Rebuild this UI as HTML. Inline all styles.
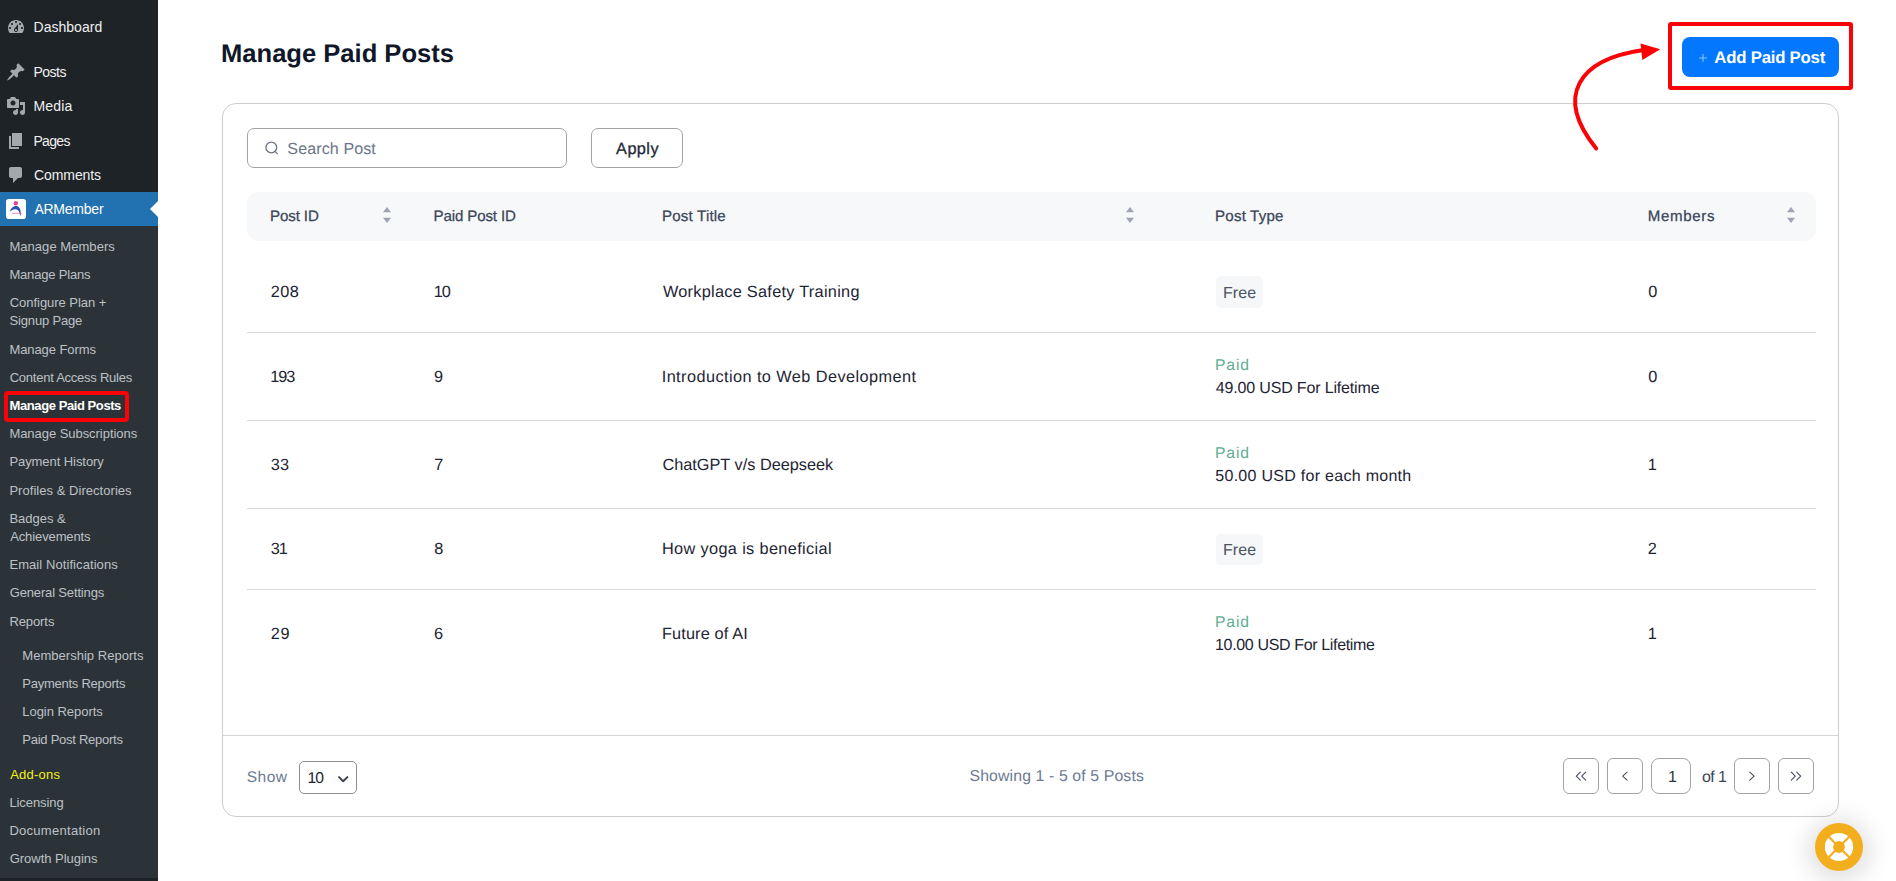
<!DOCTYPE html>
<html>
<head>
<meta charset="utf-8">
<title>Manage Paid Posts</title>
<style>
*{box-sizing:border-box;margin:0;padding:0}
html,body{width:1896px;height:881px;overflow:hidden;background:#fff;font-family:"Liberation Sans",sans-serif;}
.a{position:absolute}
.t{position:absolute;white-space:nowrap;line-height:20px;height:20px}
.ic{position:absolute;width:20px;height:20px;fill:#a4a8ac}
.pb{position:absolute;top:758px;width:36px;height:36px;border:1px solid #a1a3a6;border-radius:6px;background:#fff}
.hl{position:absolute;left:247px;width:1569px;height:1px;background:#d8dadd}
.ch{position:absolute;fill:none;stroke:#4a5260;stroke-width:1.15;stroke-linecap:round;stroke-linejoin:round}
.sort{position:absolute;top:207px;width:8px;height:16px}
</style>
</head>
<body>
<!-- ===== sidebar ===== -->
<div class="a" style="left:0;top:0;width:158px;height:881px;background:#1d2327"></div>
<div class="a" style="left:0;top:192px;width:158px;height:34px;background:#2271b1"></div>
<div class="a" style="left:0;top:226px;width:158px;height:652px;background:#2c3338"></div>
<div class="a" style="left:150px;top:201px;width:0;height:0;border:8px solid transparent;border-right-color:#fff;border-left-width:0"></div>

<svg class="ic" style="left:6px;top:17px" viewBox="0 0 20 20"><path d="M3.76 16h12.48c1.1-1.37 1.76-3.11 1.76-5 0-4.420-3.580-8-8-8s-8 3.580-8 8c0 1.890.660 3.630 1.760 5zM10 4c.550 0 1 .450 1 1s-.450 1-1 1-1-.450-1-1 .450-1 1-1zM6 6c.550 0 1 .450 1 1s-.450 1-1 1-1-.450-1-1 .450-1 1-1zm8 0c.550 0 1 .450 1 1s-.450 1-1 1-1-.450-1-1 .450-1 1-1zm-5.370 5.550L12 7v6c0 1.100-.900 2-2 2s-2-.900-2-2c0-.570.240-1.080.630-1.450zM4 10c.550 0 1 .450 1 1s-.450 1-1 1-1-.450-1-1 .450-1 1-1zm12 0c.550 0 1 .450 1 1s-.450 1-1 1-1-.450-1-1 .450-1 1-1zm-5 3c0-.550-.450-1-1-1s-1 .450-1 1 .450 1 1 1 1-.450 1-1z"/></svg>
<svg class="ic" style="left:6px;top:62px" viewBox="0 0 20 20"><path d="M10.440 3.020l1.820-1.820 6.360 6.350-1.830 1.820c-1.050-.680-2.480-.570-3.410.360l-.750.750c-.920.930-1.040 2.350-.350 3.410l-1.830 1.820-2.410-2.410-2.800 2.790c-.420.420-3.380 2.710-3.800 2.290s1.860-3.390 2.280-3.810l2.790-2.790L4.100 9.360l1.830-1.820c1.050.690 2.480.570 3.400-.360l.750-.750c.930-.920 1.050-2.350.360-3.410z"/></svg>
<svg class="ic" style="left:6px;top:96px" viewBox="0 0 20 20"><path d="M13 11V4c0-.550-.450-1-1-1h-1.670L9 1H5L3.670 3H2c-.550 0-1 .450-1 1v7c0 .550.450 1 1 1h10c.550 0 1-.450 1-1zM7 4.500c1.380 0 2.500 1.120 2.500 2.500S8.380 9.500 7 9.500 4.500 8.380 4.500 7 5.620 4.500 7 4.500zM14 6h5v10.500c0 1.380-1.120 2.500-2.500 2.500S14 17.880 14 16.500s1.120-2.500 2.500-2.500c.170 0 .340.020.500.050V9h-3V6zm-4 8.050V13h2v3.500c0 1.380-1.120 2.500-2.500 2.500S7 17.880 7 16.500 8.120 14 9.500 14c.170 0 .340.020.500.050z"/></svg>
<svg class="ic" style="left:6px;top:131px" viewBox="0 0 20 20"><path d="M6 15V2h10v13H6zm-1 1h8v2H3V5h2v11z"/></svg>
<svg class="ic" style="left:6px;top:165px" viewBox="0 0 20 20"><path d="M5 2h9c1.100 0 2 .900 2 2v7c0 1.100-.900 2-2 2h-2l-5 5v-5H5c-1.100 0-2-.900-2-2V4c0-1.100.900-2 2-2z"/></svg>
<!-- ARMember logo -->
<svg class="a" style="left:6px;top:199px" width="20" height="20" viewBox="0 0 20 20"><rect width="20" height="20" rx="2.8" fill="#fff"/><circle cx="9.800" cy="4.300" r="2.200" fill="#e8409a"/><path d="M3.900 12.400C5 8.400 8 6.900 9.800 6.900C12.700 6.900 14.800 9.500 14.600 13L14.700 17.200C13.400 15.200 13.600 14 13.200 13C12.300 10.800 10.600 10 9 10.200C7 10.500 5.500 11.200 3.900 12.400Z" fill="#2a4fb5"/><path d="M6 14.300L15.600 14.300" stroke="#e8409a" stroke-width=".6"/></svg>
<!-- red box in sidebar -->
<div class="a" style="left:4px;top:391px;width:125px;height:31px;border:4px solid #fb0306;border-radius:4px"></div>

<!-- ===== card ===== -->
<div class="a" style="left:222px;top:103px;width:1617px;height:714px;border:1px solid #cecece;border-radius:14px;background:#fff"></div>
<div class="a" style="left:223px;top:735px;width:1615px;height:1px;background:#d3d5d8"></div>

<!-- search + apply -->
<div class="a" style="left:247px;top:128px;width:320px;height:40px;border:1px solid #a1a3a7;border-radius:7px"></div>
<svg class="a" style="left:264px;top:140px" width="16" height="16" viewBox="0 0 16 16" fill="none" stroke="#6b7280" stroke-width="1.3" stroke-linecap="round"><circle cx="7.300" cy="7.500" r="5.400"/><path d="M11.300 11.600L13.300 13.600"/></svg>
<div class="a" style="left:591px;top:128px;width:92px;height:40px;border:1px solid #a1a3a7;border-radius:7px"></div>

<!-- table header -->
<div class="a" style="left:247px;top:192px;width:1569px;height:49px;background:#f6f8fa;border-radius:12px"></div>
<svg class="sort" style="left:383px" viewBox="0 0 8 16"><path d="M4 0L8 5.200H0Z M4 16L8 10.800H0Z" fill="#a0a3b4"/></svg>
<svg class="sort" style="left:1126px" viewBox="0 0 8 16"><path d="M4 0L8 5.200H0Z M4 16L8 10.800H0Z" fill="#a0a3b4"/></svg>
<svg class="sort" style="left:1787px" viewBox="0 0 8 16"><path d="M4 0L8 5.200H0Z M4 16L8 10.800H0Z" fill="#a0a3b4"/></svg>

<!-- row separators -->
<div class="hl" style="top:332px"></div>
<div class="hl" style="top:420px"></div>
<div class="hl" style="top:508px"></div>
<div class="hl" style="top:589px"></div>

<!-- Free badges -->
<div class="a" style="left:1216px;top:276px;width:47px;height:32px;background:#f6f7f9;border-radius:5px"></div>
<div class="a" style="left:1216px;top:534px;width:47px;height:31px;background:#f6f7f9;border-radius:5px"></div>

<!-- footer -->
<div class="a" style="left:299px;top:761px;width:58px;height:33px;border:1px solid #898c91;border-radius:5px"></div>
<svg class="a" style="left:337px;top:774px" width="13" height="10" viewBox="0 0 13 10" fill="none" stroke="#3b4148" stroke-width="1.900" stroke-linecap="round" stroke-linejoin="round"><path d="M2 3.100L6.200 7.200L10.400 3.100"/></svg>

<div class="pb" style="left:1563px"></div>
<div class="pb" style="left:1607px"></div>
<div class="pb" style="left:1651px;width:40px;border-radius:8px"></div>
<div class="pb" style="left:1734px"></div>
<div class="pb" style="left:1778px"></div>
<svg class="ch" style="left:1574px;top:770px" width="14" height="12" viewBox="0 0 14 12"><path d="M6.300 2.100L2.300 6.100L6.300 10.100M11.700 2.100L7.700 6.100L11.700 10.100"/></svg>
<svg class="ch" style="left:1620px;top:770px" width="10" height="12" viewBox="0 0 10 12"><path d="M7.100 2.100L2.700 6.100L7.100 10.100"/></svg>
<svg class="ch" style="left:1747px;top:770px" width="10" height="12" viewBox="0 0 10 12"><path d="M2.700 2.100L7.100 6.100L2.700 10.100"/></svg>
<svg class="ch" style="left:1789px;top:770px" width="14" height="12" viewBox="0 0 14 12"><path d="M2.300 2.100L6.300 6.100L2.300 10.100M7.700 2.100L11.700 6.100L7.700 10.100"/></svg>

<!-- add button + red annotations -->
<div class="a" style="left:1668px;top:22px;width:185px;height:68px;border:4px solid #fb0306;border-radius:3px"></div>
<div class="a" style="left:1682px;top:37px;width:157px;height:40px;background:#0378ff;border-radius:8px"></div>
<svg class="a" style="left:1698px;top:53px" width="10" height="10" viewBox="0 0 10 10"><path d="M5 1V9M1 5H9" stroke="#86c3ff" stroke-width="1.100"/></svg>
<svg class="a" style="left:1560px;top:30px" width="110" height="130" viewBox="1560 30 110 130"><path d="M1596.200 148.500C1553.800 96 1579.100 59.500 1642 50.300" fill="none" stroke="#fb0306" stroke-width="4" stroke-linecap="round"/><path d="M1640.500 43.400L1660.300 49.200L1642.300 59.900Z" fill="#fb0306"/></svg>

<!-- help bubble -->
<div class="a" style="left:1815px;top:823px;width:48px;height:48px;border-radius:50%;background:#f3ae1e;box-shadow:0 3px 24px 7px rgba(0,0,0,.13)"></div>
<svg class="a" style="left:1824px;top:832px" width="30" height="30" viewBox="0 0 30 30"><circle cx="15" cy="15" r="10" fill="none" stroke="#fff" stroke-width="8.200"/><path d="M3 3L27 27M27 3L3 27" stroke="#f3ae1e" stroke-width="2.200"/><rect x="10" y="10" width="10" height="10" rx="3.600" fill="#f3ae1e"/></svg>

<div class="t" id="t0" style="left:33.49px;top:17.00px;font-size:14px;color:#f0f0f1;letter-spacing:0.031px;">Dashboard</div>
<div class="t" id="t1" style="left:33.49px;top:62.00px;font-size:14px;color:#f0f0f1;letter-spacing:-0.524px;">Posts</div>
<div class="t" id="t2" style="left:33.49px;top:96.00px;font-size:14px;color:#f0f0f1;letter-spacing:0.146px;">Media</div>
<div class="t" id="t3" style="left:33.49px;top:131.00px;font-size:14px;color:#f0f0f1;letter-spacing:-0.698px;">Pages</div>
<div class="t" id="t4" style="left:34.02px;top:165.00px;font-size:14px;color:#f0f0f1;letter-spacing:-0.090px;">Comments</div>
<div class="t" id="t5" style="left:34.39px;top:199.00px;font-size:14px;color:#ffffff;letter-spacing:-0.226px;">ARMember</div>
<div class="t" id="t6" style="left:9.39px;top:237.00px;font-size:13px;color:#bdc1c6;letter-spacing:0.052px;">Manage Members</div>
<div class="t" id="t7" style="left:9.39px;top:265.00px;font-size:13px;color:#bdc1c6;letter-spacing:-0.175px;">Manage Plans</div>
<div class="t" id="t8" style="left:9.69px;top:293.00px;font-size:13px;color:#bdc1c6;letter-spacing:-0.032px;">Configure Plan +</div>
<div class="t" id="t9" style="left:9.56px;top:311.00px;font-size:13px;color:#bdc1c6;letter-spacing:-0.168px;">Signup Page</div>
<div class="t" id="t10" style="left:9.39px;top:340.00px;font-size:13px;color:#bdc1c6;letter-spacing:-0.077px;">Manage Forms</div>
<div class="t" id="t11" style="left:9.69px;top:368.00px;font-size:13px;color:#bdc1c6;letter-spacing:-0.244px;">Content Access Rules</div>
<div class="t" id="t12" style="left:9.61px;top:396.00px;font-size:13px;color:#ffffff;letter-spacing:-0.423px;font-weight:bold;">Manage Paid Posts</div>
<div class="t" id="t13" style="left:9.39px;top:424.00px;font-size:13px;color:#bdc1c6;letter-spacing:-0.044px;">Manage Subscriptions</div>
<div class="t" id="t14" style="left:9.39px;top:452.00px;font-size:13px;color:#bdc1c6;letter-spacing:-0.063px;">Payment History</div>
<div class="t" id="t15" style="left:9.39px;top:481.00px;font-size:13px;color:#bdc1c6;letter-spacing:0.040px;">Profiles &amp; Directories</div>
<div class="t" id="t16" style="left:9.39px;top:509.00px;font-size:13px;color:#bdc1c6;letter-spacing:-0.009px;">Badges &amp;</div>
<div class="t" id="t17" style="left:10.18px;top:527.00px;font-size:13px;color:#bdc1c6;letter-spacing:-0.110px;">Achievements</div>
<div class="t" id="t18" style="left:9.39px;top:555.00px;font-size:13px;color:#bdc1c6;letter-spacing:0.080px;">Email Notifications</div>
<div class="t" id="t19" style="left:9.69px;top:583.00px;font-size:13px;color:#bdc1c6;letter-spacing:-0.153px;">General Settings</div>
<div class="t" id="t20" style="left:9.39px;top:612.00px;font-size:13px;color:#bdc1c6;letter-spacing:-0.085px;">Reports</div>
<div class="t" id="t21" style="left:22.31px;top:646.00px;font-size:13px;color:#bdc1c6;letter-spacing:0.029px;">Membership Reports</div>
<div class="t" id="t22" style="left:22.31px;top:674.00px;font-size:13px;color:#bdc1c6;letter-spacing:-0.253px;">Payments Reports</div>
<div class="t" id="t23" style="left:22.31px;top:702.00px;font-size:13px;color:#bdc1c6;letter-spacing:-0.041px;">Login Reports</div>
<div class="t" id="t24" style="left:22.31px;top:730.00px;font-size:13px;color:#bdc1c6;letter-spacing:-0.259px;">Paid Post Reports</div>
<div class="t" id="t25" style="left:10.16px;top:765.00px;font-size:13px;color:#f1f11a;letter-spacing:0.218px;">Add-ons</div>
<div class="t" id="t26" style="left:9.39px;top:793.00px;font-size:13px;color:#bdc1c6;letter-spacing:-0.072px;">Licensing</div>
<div class="t" id="t27" style="left:9.39px;top:821.00px;font-size:13px;color:#bdc1c6;letter-spacing:0.282px;">Documentation</div>
<div class="t" id="t28" style="left:9.69px;top:849.00px;font-size:13px;color:#bdc1c6;letter-spacing:-0.030px;">Growth Plugins</div>
<div class="t" id="t29" style="left:221.02px;top:44.00px;font-size:25.6px;color:#0f1729;letter-spacing:-0.017px;font-weight:bold;text-rendering:geometricPrecision;">Manage Paid Posts</div>
<div class="t" id="t30" style="left:287.33px;top:139.00px;font-size:16.1px;color:#6b7588;letter-spacing:0.085px;text-rendering:geometricPrecision;">Search Post</div>
<div class="t" id="t31" style="left:616.10px;top:139.00px;font-size:16.3px;color:#1f2937;letter-spacing:0.430px;text-rendering:geometricPrecision;-webkit-text-stroke:0.3px #1f2937;">Apply</div>
<div class="t" id="t32" style="left:270.06px;top:207.00px;font-size:15.1px;color:#3a4557;letter-spacing:-0.121px;text-rendering:geometricPrecision;-webkit-text-stroke:0.25px #3a4557;">Post ID</div>
<div class="t" id="t33" style="left:433.44px;top:207.00px;font-size:15.1px;color:#3a4557;letter-spacing:-0.122px;text-rendering:geometricPrecision;-webkit-text-stroke:0.25px #3a4557;">Paid Post ID</div>
<div class="t" id="t34" style="left:662.06px;top:207.00px;font-size:15.1px;color:#3a4557;letter-spacing:0.180px;text-rendering:geometricPrecision;-webkit-text-stroke:0.25px #3a4557;">Post Title</div>
<div class="t" id="t35" style="left:1215.06px;top:207.00px;font-size:15.1px;color:#3a4557;letter-spacing:0.190px;text-rendering:geometricPrecision;-webkit-text-stroke:0.25px #3a4557;">Post Type</div>
<div class="t" id="t36" style="left:1647.66px;top:207.00px;font-size:15.1px;color:#3a4557;letter-spacing:0.670px;text-rendering:geometricPrecision;-webkit-text-stroke:0.25px #3a4557;">Members</div>
<div class="t" id="t37" style="left:270.73px;top:282.00px;font-size:16.3px;color:#1d2433;letter-spacing:0.469px;text-rendering:geometricPrecision;">208</div>
<div class="t" id="t38" style="left:433.80px;top:282.00px;font-size:16.3px;color:#1d2433;letter-spacing:-1.000px;text-rendering:geometricPrecision;">10</div>
<div class="t" id="t39" style="left:662.92px;top:282.00px;font-size:16.3px;color:#1d2433;letter-spacing:0.283px;text-rendering:geometricPrecision;">Workplace Safety Training</div>
<div class="t" id="t40" style="left:1648.22px;top:282.00px;font-size:16.3px;color:#1d2433;text-rendering:geometricPrecision;">0</div>
<div class="t" id="t41" style="left:1223.03px;top:284.00px;font-size:16px;color:#4b5563;letter-spacing:0.040px;text-rendering:geometricPrecision;">Free</div>
<div class="t" id="t42" style="left:270.23px;top:367.00px;font-size:16.3px;color:#1d2433;letter-spacing:-1.000px;text-rendering:geometricPrecision;">193</div>
<div class="t" id="t43" style="left:434.10px;top:367.00px;font-size:16.3px;color:#1d2433;text-rendering:geometricPrecision;">9</div>
<div class="t" id="t44" style="left:661.68px;top:367.00px;font-size:16.3px;color:#1d2433;letter-spacing:0.433px;text-rendering:geometricPrecision;">Introduction to Web Development</div>
<div class="t" id="t45" style="left:1648.22px;top:367.00px;font-size:16.3px;color:#1d2433;text-rendering:geometricPrecision;">0</div>
<div class="t" id="t46" style="left:1215.01px;top:356.00px;font-size:15.7px;color:#5fae92;letter-spacing:0.900px;text-rendering:geometricPrecision;">Paid</div>
<div class="t" id="t47" style="left:1215.79px;top:379.00px;font-size:16px;color:#1d2433;letter-spacing:-0.162px;text-rendering:geometricPrecision;">49.00 USD For Lifetime</div>
<div class="t" id="t48" style="left:270.63px;top:455.00px;font-size:16.3px;color:#1d2433;letter-spacing:0.198px;text-rendering:geometricPrecision;">33</div>
<div class="t" id="t49" style="left:434.14px;top:455.00px;font-size:16.3px;color:#1d2433;text-rendering:geometricPrecision;">7</div>
<div class="t" id="t50" style="left:662.39px;top:455.00px;font-size:16.3px;color:#1d2433;letter-spacing:0.008px;text-rendering:geometricPrecision;">ChatGPT v/s Deepseek</div>
<div class="t" id="t51" style="left:1647.65px;top:455.00px;font-size:16.3px;color:#1d2433;text-rendering:geometricPrecision;">1</div>
<div class="t" id="t52" style="left:1215.01px;top:444.00px;font-size:15.7px;color:#5fae92;letter-spacing:0.900px;text-rendering:geometricPrecision;">Paid</div>
<div class="t" id="t53" style="left:1215.29px;top:467.00px;font-size:16px;color:#1d2433;letter-spacing:0.283px;text-rendering:geometricPrecision;">50.00 USD for each month</div>
<div class="t" id="t54" style="left:270.63px;top:539.00px;font-size:16.3px;color:#1d2433;letter-spacing:-1.000px;text-rendering:geometricPrecision;">31</div>
<div class="t" id="t55" style="left:434.32px;top:539.00px;font-size:16.3px;color:#1d2433;text-rendering:geometricPrecision;">8</div>
<div class="t" id="t56" style="left:661.91px;top:539.00px;font-size:16.3px;color:#1d2433;letter-spacing:0.367px;text-rendering:geometricPrecision;">How yoga is beneficial</div>
<div class="t" id="t57" style="left:1647.86px;top:539.00px;font-size:16.3px;color:#1d2433;text-rendering:geometricPrecision;">2</div>
<div class="t" id="t58" style="left:1223.03px;top:541.00px;font-size:16px;color:#4b5563;letter-spacing:0.040px;text-rendering:geometricPrecision;">Free</div>
<div class="t" id="t59" style="left:270.73px;top:624.00px;font-size:16.3px;color:#1d2433;letter-spacing:0.631px;text-rendering:geometricPrecision;">29</div>
<div class="t" id="t60" style="left:434.06px;top:624.00px;font-size:16.3px;color:#1d2433;text-rendering:geometricPrecision;">6</div>
<div class="t" id="t61" style="left:661.91px;top:624.00px;font-size:16.3px;color:#1d2433;letter-spacing:0.160px;text-rendering:geometricPrecision;">Future of AI</div>
<div class="t" id="t62" style="left:1647.65px;top:624.00px;font-size:16.3px;color:#1d2433;text-rendering:geometricPrecision;">1</div>
<div class="t" id="t63" style="left:1215.01px;top:613.00px;font-size:15.7px;color:#5fae92;letter-spacing:0.900px;text-rendering:geometricPrecision;">Paid</div>
<div class="t" id="t64" style="left:1215.06px;top:636.00px;font-size:16px;color:#1d2433;letter-spacing:-0.349px;text-rendering:geometricPrecision;">10.00 USD For Lifetime</div>
<div class="t" id="t65" style="left:246.82px;top:768.00px;font-size:15.5px;color:#6c7993;letter-spacing:0.432px;text-rendering:geometricPrecision;">Show</div>
<div class="t" id="t66" style="left:307.60px;top:769.00px;font-size:15.7px;color:#1d2433;letter-spacing:-1.000px;text-rendering:geometricPrecision;">10</div>
<div class="t" id="t67" style="left:969.54px;top:767.00px;font-size:15.8px;color:#6c7993;letter-spacing:0.132px;text-rendering:geometricPrecision;">Showing 1 - 5 of 5 Posts</div>
<div class="t" id="t68" style="left:1667.93px;top:768.00px;font-size:16px;color:#2b3445;text-rendering:geometricPrecision;">1</div>
<div class="t" id="t69" style="left:1702.09px;top:768.00px;font-size:16px;color:#3b4557;letter-spacing:-0.648px;text-rendering:geometricPrecision;">of 1</div>
<div class="t" id="t70" style="left:1714.33px;top:48.00px;font-size:16.8px;color:#ffffff;letter-spacing:-0.232px;font-weight:bold;text-rendering:geometricPrecision;">Add Paid Post</div>
</body>
</html>
